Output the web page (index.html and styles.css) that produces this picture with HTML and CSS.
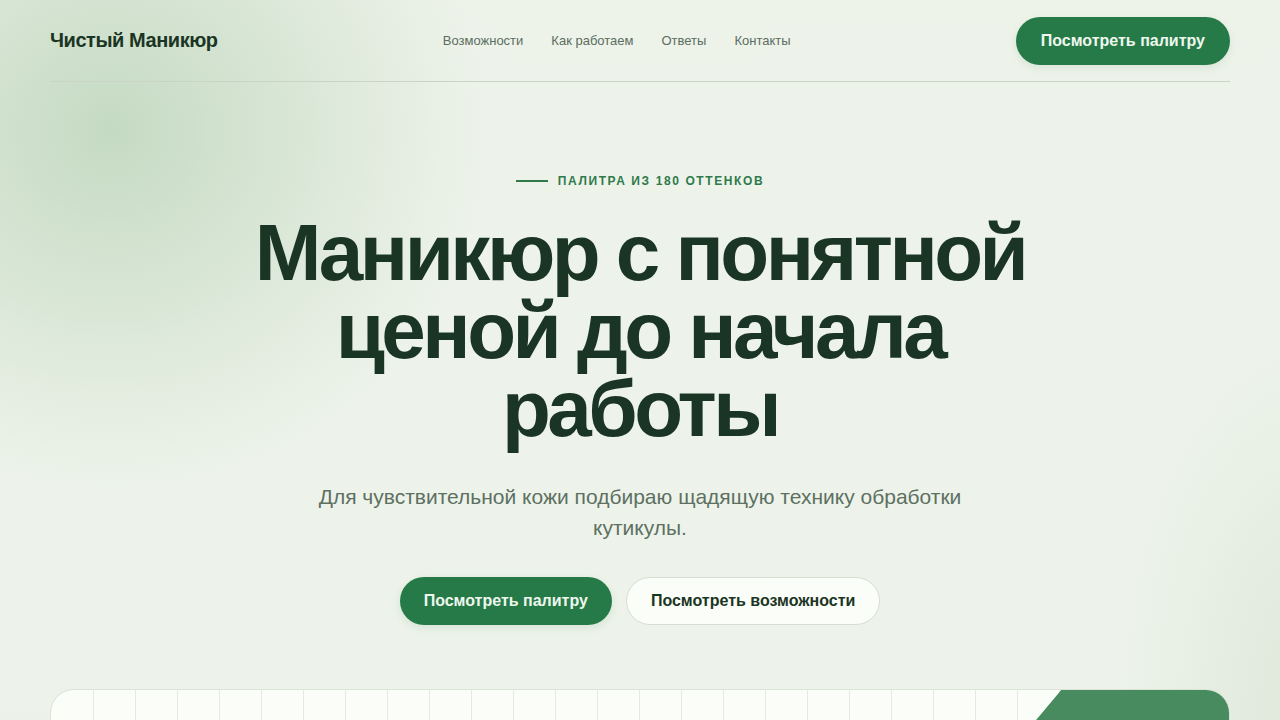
FILE: index.html
```html
<!DOCTYPE html>
<html lang="ru">
<head>
<meta charset="utf-8">
<title>Чистый Маникюр</title>
<link rel="stylesheet" href="styles.css">
</head>
<body>
<div class="page">
  <header class="header">
    <a class="logo" href="#">Чистый Маникюр</a>
    <nav class="nav">
      <a href="#">Возможности</a>
      <a href="#">Как работаем</a>
      <a href="#">Ответы</a>
      <a href="#">Контакты</a>
    </nav>
    <a class="btn btn-primary btn-header" href="#">Посмотреть палитру</a>
  </header>

  <section class="hero">
    <div class="eyebrow"><span class="eyebrow-line"></span>Палитра из 180 оттенков</div>
    <h1 class="title">Маникюр с понятной ценой до начала работы</h1>
    <p class="lead">Для чувствительной кожи подбираю щадящую технику обработки кутикулы.</p>
    <div class="actions">
      <a class="btn btn-primary" href="#">Посмотреть палитру</a>
      <a class="btn btn-secondary" href="#">Посмотреть возможности</a>
    </div>
  </section>

  <section class="showcase">
    <div class="showcase-shape"></div>
  </section>
</div>
</body>
</html>
```

FILE: styles.css
```css
* { box-sizing: border-box; }

html, body {
  margin: 0;
  padding: 0;
}

body {
  font-family: "Liberation Sans", Arial, sans-serif;
  color: #1b3524;
  background-color: #eef3ea;
  background-image:
    radial-gradient(ellipse 380px 360px at 110px 130px, rgba(190, 214, 188, 0.85), rgba(190, 214, 188, 0) 100%),
    radial-gradient(ellipse 200px 360px at 1320px 700px, rgba(210, 224, 206, 0.6), rgba(210, 224, 206, 0) 100%),
    linear-gradient(180deg, #eef3ea 0%, #edf3ea 60%, #e8efe4 100%);
  min-height: 720px;
  overflow: hidden;
}

a { text-decoration: none; color: inherit; }

.page {
  width: 1180px;
  margin: 0 auto;
}

.header {
  height: 82px;
  display: flex;
  align-items: center;
  justify-content: space-between;
  border-bottom: 1px solid #c9d4c7;
}

.logo {
  font-size: 20px;
  font-weight: 700;
  letter-spacing: -0.45px;
  color: #1b3524;
}

.nav {
  display: flex;
  gap: 28px;
  font-size: 13px;
  color: #5b6d5f;
}

.btn {
  display: inline-flex;
  align-items: center;
  justify-content: center;
  height: 48px;
  padding: 0 24px;
  border-radius: 24px;
  font-size: 16px;
  font-weight: 700;
}

.btn-header {
  margin-top: 1px;
  padding: 0 25px;
}

.btn-primary {
  background: #267a47;
  color: #eef7ee;
  box-shadow: 0 3px 8px rgba(38, 122, 71, 0.12);
}

.btn-secondary {
  background: #fbfdf8;
  color: #1b3524;
  border: 1px solid #d6ded3;
}

.hero {
  display: flex;
  flex-direction: column;
  align-items: center;
  text-align: center;
  padding-top: 92px;
}

.eyebrow {
  display: flex;
  align-items: center;
  gap: 10px;
  font-size: 12px;
  font-weight: 700;
  letter-spacing: 1.6px;
  text-transform: uppercase;
  color: #2e7a4a;
}

.eyebrow-line {
  display: block;
  width: 32px;
  height: 2px;
  background: #2e7a4a;
}

.title {
  margin: 26px 0 0;
  width: 840px;
  font-size: 80px;
  line-height: 78px;
  font-weight: 700;
  letter-spacing: -3.5px;
  color: #1b3524;
}

.lead {
  margin: 33px 0 0;
  width: 700px;
  font-size: 21px;
  line-height: 31px;
  color: #5d7062;
}

.actions {
  display: flex;
  gap: 14px;
  margin-top: 34px;
}

.showcase {
  position: relative;
  margin-top: 64px;
  height: 420px;
  border-radius: 24px;
  border: 1px solid #dbe2d8;
  background-color: #fbfdf8;
  background-image: repeating-linear-gradient(90deg, transparent 0 41px, #e4e9e1 41px 42px);
  background-position: 1px 0;
  overflow: hidden;
}

.showcase-shape {
  position: absolute;
  left: 1267px;
  top: -306px;
  width: 700px;
  height: 1100px;
  background: #478b5e;
  border-radius: 80px;
  transform-origin: 0 0;
  transform: rotate(40deg);
}
```
